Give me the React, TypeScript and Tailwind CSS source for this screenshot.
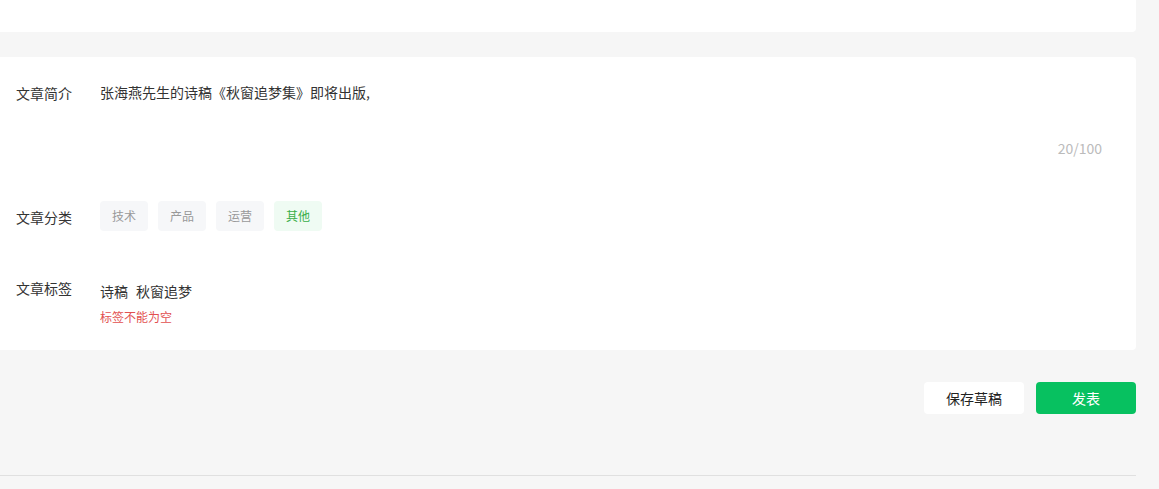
const TAGS = ['技术', '产品', '运营', '其他']

export default function App() {
  return (
    <div
      className="h-[489px] w-[1159px] overflow-hidden bg-[#f6f6f6] text-[#333]"
      style={{ fontFamily: '"Noto Sans CJK SC", "Noto Sans", sans-serif' }}
    >
      <div className="w-[1136px]">
        <div className="h-[32px] rounded-br-[4px] bg-white" />

        <div className="mt-[25px] h-[293px] rounded-r-[4px] bg-white px-4 pt-[24px]">
          {/* 简介 */}
          <div className="flex">
            <div className="w-[84px] pt-[2px] text-[14px] leading-[20px]">文章简介</div>
            <div className="flex-1 pr-[18px]">
              <p className="text-[14px] leading-[22px]">张海燕先生的诗稿《秋窗追梦集》即将出版,</p>
              <div className="mt-[35px] text-right text-[14px] leading-[20px] text-[#bbb]">20/100</div>
            </div>
          </div>

          {/* 分类 */}
          <div className="mt-[43px] flex items-center">
            <div className="w-[84px] pt-[2px] text-[14px] leading-[20px]">文章分类</div>
            <div className="flex gap-[10px]">
              {TAGS.map((t) => (
                <span
                  key={t}
                  className={
                    t === '其他'
                      ? 'flex h-[30px] w-[48px] items-center justify-center rounded-[4px] bg-[#effbf3] text-[12px] text-[#3aae4a]'
                      : 'flex h-[30px] w-[48px] items-center justify-center rounded-[4px] bg-[#f6f7f9] text-[12px] text-[#999]'
                  }
                >
                  {t}
                </span>
              ))}
            </div>
          </div>

          {/* 标签 */}
          <div className="mt-[47px] flex">
            <div className="w-[84px] text-[14px] leading-[20px]">文章标签</div>
            <div className="pt-[3px]">
              <div className="flex gap-[8px] text-[14px] leading-[20px]">
                <span>诗稿</span>
                <span>秋窗追梦</span>
              </div>
              <div className="mt-[8px] text-[12px] leading-[16px] text-[#e25050]">标签不能为空</div>
            </div>
          </div>
        </div>

        <div className="mt-[32px] flex justify-end gap-[12px]">
          <button className="h-[32px] w-[100px] rounded-[4px] bg-white text-[14px] text-[#222]">
            保存草稿
          </button>
          <button className="h-[32px] w-[100px] rounded-[4px] bg-[#07c160] text-[14px] text-white">
            发表
          </button>
        </div>

        <div className="mt-[61px] h-px bg-[#e0e0e0]" />
      </div>
    </div>
  )
}
